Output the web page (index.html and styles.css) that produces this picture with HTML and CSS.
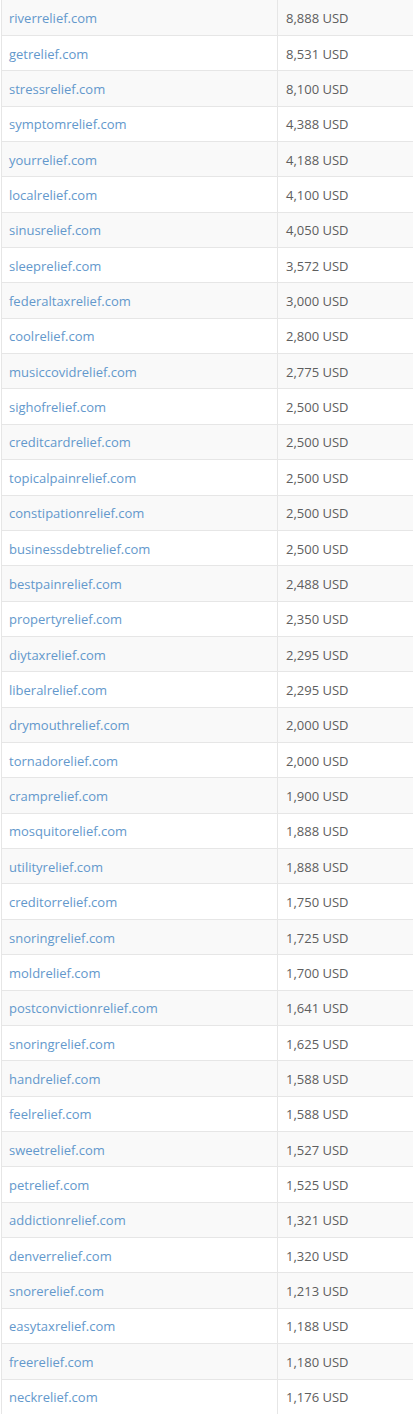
FILE: index.html
```html
<!DOCTYPE html>
<html>
<head>
<meta charset="utf-8">
<link rel="stylesheet" href="styles.css">
</head>
<body>
<table class="prices">
<tbody>
<tr><td class="dom"><a href="#">riverrelief.com</a></td><td class="amt">8,888 USD</td></tr>
<tr><td class="dom"><a href="#">getrelief.com</a></td><td class="amt">8,531 USD</td></tr>
<tr><td class="dom"><a href="#">stressrelief.com</a></td><td class="amt">8,100 USD</td></tr>
<tr><td class="dom"><a href="#">symptomrelief.com</a></td><td class="amt">4,388 USD</td></tr>
<tr><td class="dom"><a href="#">yourrelief.com</a></td><td class="amt">4,188 USD</td></tr>
<tr><td class="dom"><a href="#">localrelief.com</a></td><td class="amt">4,100 USD</td></tr>
<tr><td class="dom"><a href="#">sinusrelief.com</a></td><td class="amt">4,050 USD</td></tr>
<tr><td class="dom"><a href="#">sleeprelief.com</a></td><td class="amt">3,572 USD</td></tr>
<tr><td class="dom"><a href="#">federaltaxrelief.com</a></td><td class="amt">3,000 USD</td></tr>
<tr><td class="dom"><a href="#">coolrelief.com</a></td><td class="amt">2,800 USD</td></tr>
<tr><td class="dom"><a href="#">musiccovidrelief.com</a></td><td class="amt">2,775 USD</td></tr>
<tr><td class="dom"><a href="#">sighofrelief.com</a></td><td class="amt">2,500 USD</td></tr>
<tr><td class="dom"><a href="#">creditcardrelief.com</a></td><td class="amt">2,500 USD</td></tr>
<tr><td class="dom"><a href="#">topicalpainrelief.com</a></td><td class="amt">2,500 USD</td></tr>
<tr><td class="dom"><a href="#">constipationrelief.com</a></td><td class="amt">2,500 USD</td></tr>
<tr><td class="dom"><a href="#">businessdebtrelief.com</a></td><td class="amt">2,500 USD</td></tr>
<tr><td class="dom"><a href="#">bestpainrelief.com</a></td><td class="amt">2,488 USD</td></tr>
<tr><td class="dom"><a href="#">propertyrelief.com</a></td><td class="amt">2,350 USD</td></tr>
<tr><td class="dom"><a href="#">diytaxrelief.com</a></td><td class="amt">2,295 USD</td></tr>
<tr><td class="dom"><a href="#">liberalrelief.com</a></td><td class="amt">2,295 USD</td></tr>
<tr><td class="dom"><a href="#">drymouthrelief.com</a></td><td class="amt">2,000 USD</td></tr>
<tr><td class="dom"><a href="#">tornadorelief.com</a></td><td class="amt">2,000 USD</td></tr>
<tr><td class="dom"><a href="#">cramprelief.com</a></td><td class="amt">1,900 USD</td></tr>
<tr><td class="dom"><a href="#">mosquitorelief.com</a></td><td class="amt">1,888 USD</td></tr>
<tr><td class="dom"><a href="#">utilityrelief.com</a></td><td class="amt">1,888 USD</td></tr>
<tr><td class="dom"><a href="#">creditorrelief.com</a></td><td class="amt">1,750 USD</td></tr>
<tr><td class="dom"><a href="#">snoringrelief.com</a></td><td class="amt">1,725 USD</td></tr>
<tr><td class="dom"><a href="#">moldrelief.com</a></td><td class="amt">1,700 USD</td></tr>
<tr><td class="dom"><a href="#">postconvictionrelief.com</a></td><td class="amt">1,641 USD</td></tr>
<tr><td class="dom"><a href="#">snoringrelief.com</a></td><td class="amt">1,625 USD</td></tr>
<tr><td class="dom"><a href="#">handrelief.com</a></td><td class="amt">1,588 USD</td></tr>
<tr><td class="dom"><a href="#">feelrelief.com</a></td><td class="amt">1,588 USD</td></tr>
<tr><td class="dom"><a href="#">sweetrelief.com</a></td><td class="amt">1,527 USD</td></tr>
<tr><td class="dom"><a href="#">petrelief.com</a></td><td class="amt">1,525 USD</td></tr>
<tr><td class="dom"><a href="#">addictionrelief.com</a></td><td class="amt">1,321 USD</td></tr>
<tr><td class="dom"><a href="#">denverrelief.com</a></td><td class="amt">1,320 USD</td></tr>
<tr><td class="dom"><a href="#">snorerelief.com</a></td><td class="amt">1,213 USD</td></tr>
<tr><td class="dom"><a href="#">easytaxrelief.com</a></td><td class="amt">1,188 USD</td></tr>
<tr><td class="dom"><a href="#">freerelief.com</a></td><td class="amt">1,180 USD</td></tr>
<tr><td class="dom"><a href="#">neckrelief.com</a></td><td class="amt">1,176 USD</td></tr>
</tbody>
</table>
</body>
</html>
```

FILE: styles.css
```css
html, body {
  margin: 0;
  padding: 0;
  background: #ffffff;
}
body {
  font-family: "Open Sans", "Noto Sans", sans-serif;
  font-size: 13px;
  color: #5e5e5e;
  overflow: hidden;
}
.prices {
  border-collapse: collapse;
  width: 413px;
  margin-left: 1px;
  table-layout: fixed;
}
.prices tr {
  height: 35.37px;
}
.prices tr:nth-child(odd) {
  background: #f9f9f9;
}
.prices td {
  padding: 1px 8px 0 7px;
  line-height: 18px;
  border-top: 1px solid #e6e6e6;
  border-bottom: 1px solid #e6e6e6;
  border-left: 1px solid #e6e6e6;
  vertical-align: middle;
  white-space: nowrap;
}
.prices tr:first-child td {
  border-top: none;
}
.prices td.dom {
  width: 260px;
}
.prices td.amt {
  padding-left: 8px;
}
.prices a {
  color: #6398cc;
  text-decoration: none;
}
```
